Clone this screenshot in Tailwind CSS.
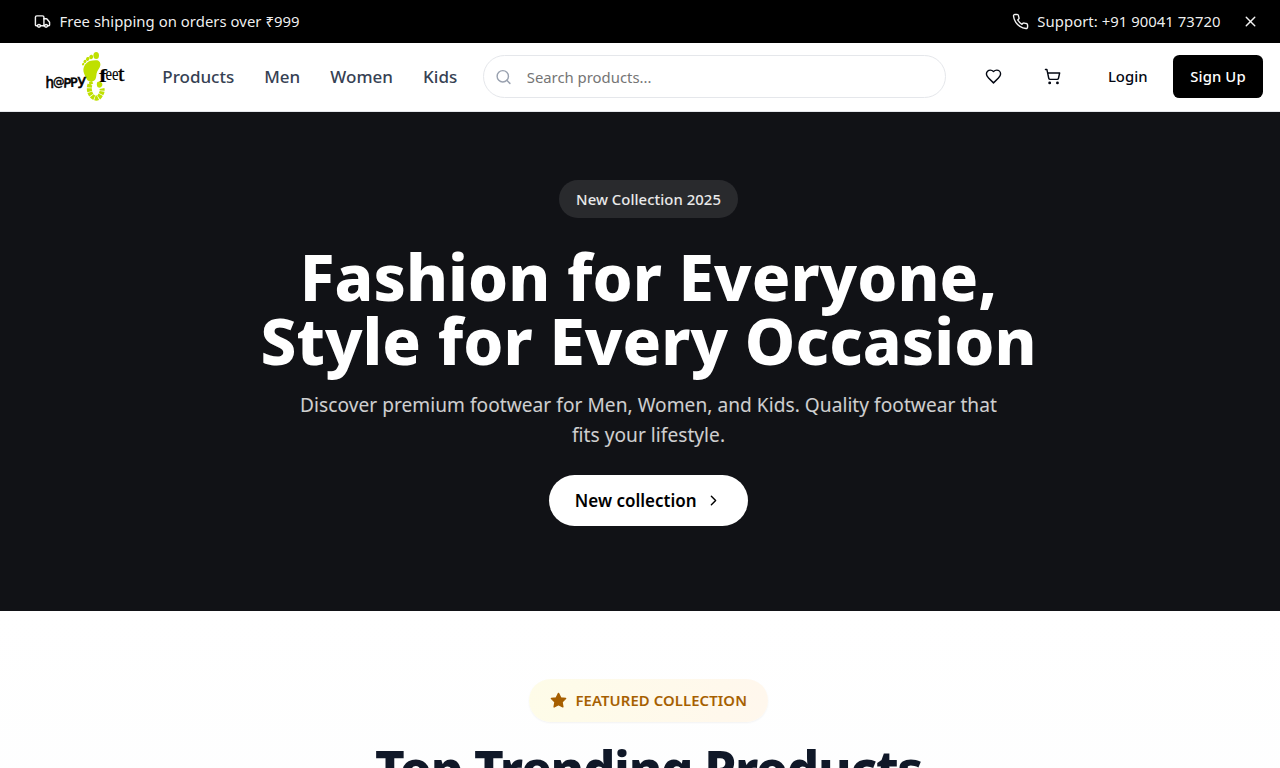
<!DOCTYPE html>
<html lang="en" class="text-[17px]">
<head>
  <meta charset="UTF-8">
  <meta name="viewport" content="width=device-width, initial-scale=1.0">
  <title>Happy Feet</title>
  <script src="https://cdn.jsdelivr.net/npm/@tailwindcss/browser@4"></script>
</head>
<body class="h-screen overflow-hidden bg-white font-['Noto_Sans',sans-serif]">
  <div class="w-[1297px]">
    <!-- announcement bar -->
    <div class="flex h-10 items-center justify-between bg-black px-8 text-sm text-white/95">
      <div class="flex items-center gap-2">
        <svg class="size-4" viewBox="0 0 24 24" fill="none" stroke="currentColor" stroke-width="2" stroke-linecap="round" stroke-linejoin="round"><path d="M14 18V6a2 2 0 0 0-2-2H4a2 2 0 0 0-2 2v11a1 1 0 0 0 1 1h2"/><path d="M15 18H9"/><path d="M19 18h2a1 1 0 0 0 1-1v-3.65a1 1 0 0 0-.22-.624l-3.48-4.35A1 1 0 0 0 17.52 8H14"/><circle cx="17" cy="18" r="2"/><circle cx="7" cy="18" r="2"/></svg>
        <span class="tracking-[0.04px]">Free shipping on orders over ₹999</span>
      </div>
      <div class="flex items-center gap-4">
        <div class="flex items-center gap-2">
          <svg class="size-4" viewBox="0 0 24 24" fill="none" stroke="currentColor" stroke-width="2" stroke-linecap="round" stroke-linejoin="round"><path d="M22 16.92v3a2 2 0 0 1-2.18 2 19.79 19.79 0 0 1-8.63-3.07 19.5 19.5 0 0 1-6-6 19.79 19.79 0 0 1-3.07-8.67A2 2 0 0 1 4.11 2h3a2 2 0 0 1 2 1.72 12.84 12.84 0 0 0 .7 2.81 2 2 0 0 1-.45 2.11L8.09 9.91a16 16 0 0 0 6 6l1.27-1.27a2 2 0 0 1 2.11-.45 12.84 12.84 0 0 0 2.81.7A2 2 0 0 1 22 16.92z"/></svg>
          <span class="tracking-[0.04px]">Support: +91 90041 73720</span>
        </div>
        <button class="p-1" aria-label="Close">
          <svg class="size-4" viewBox="0 0 24 24" fill="none" stroke="currentColor" stroke-width="2" stroke-linecap="round" stroke-linejoin="round"><path d="M18 6 6 18"/><path d="m6 6 12 12"/></svg>
        </button>
      </div>
    </div>

    <!-- header -->
    <header class="border-b border-gray-200 bg-white">
      <div class="flex h-16 items-center px-8">
        <a href="#" class="w-[128.3px] shrink-0 pl-0.5">
          <svg class="h-[62px] w-[100px]" viewBox="36 46 100 62">
            <g fill="#bfe000">
              <ellipse cx="96.2" cy="55.5" rx="2.8" ry="3.6"/>
              <ellipse cx="91.2" cy="57" rx="1.9" ry="2.3" transform="rotate(15 91.2 57)"/>
              <ellipse cx="87.7" cy="58.9" rx="1.7" ry="2" transform="rotate(25 87.7 58.9)"/>
              <ellipse cx="85" cy="61.400" rx="1.4" ry="1.7" transform="rotate(35 85 61.400)"/>
              <ellipse cx="83.200" cy="64.2" rx="1.1" ry="1.4" transform="rotate(35 83.200 64.2)"/>
              <path d="M95.500 60.200c3.500-.2 5.100 2 4.900 4.700-.3 3.300-3.300 5.500-3.800 8.500-.4 2.600-.3 5.300-2.300 7.200-2.300 1.700-6 1.100-7.300-1.200-1.200-2.200-3-5.200-3.500-8-.6-4.700 2.300-8.600 6.200-10.300 1.900-.7 3.900-.9 5.800-.9z"/>
              <path d="M97.500 82c2.200-1.500 4.900.2 4.900 2.400 0 2.100-2 3.700-3.800 3.200-2-.5-2.200-4.400-1.100-5.600z"/>
            </g>
            <path d="M89 82l3-1 1.200 2.400-3.800 2.200z" fill="#bfe000"/>
            <path d="M90 84.500c-1.200 3-.9 7.500 1.400 10.800 2.400 3.300 6.200 3.800 8.300 1 1.900-2.700 2.900-4.800 2.300-7.800" fill="none" stroke="#bfe000" stroke-width="5" stroke-dasharray="3.200 .7"/>
            <g font-family="'DejaVu Sans',sans-serif" fill="#000" stroke="#000">
              <text x="45.500" y="87.500" textLength="8.500" lengthAdjust="spacingAndGlyphs" font-size="15.500" stroke-width=".7">h</text>
              <text x="53" y="85.700" textLength="11.500" lengthAdjust="spacingAndGlyphs" font-size="12" stroke-width=".4">@</text>
              <text x="63.300" y="87.500" textLength="7.500" lengthAdjust="spacingAndGlyphs" font-size="12.500" stroke-width=".7" transform="rotate(3 67 87)">P</text>
              <text x="70.500" y="86.500" textLength="7.500" lengthAdjust="spacingAndGlyphs" font-size="12" stroke-width=".7" transform="rotate(-4 74 86)">P</text>
              <text x="77.200" y="84.500" textLength="9" lengthAdjust="spacingAndGlyphs" font-size="13.500" stroke-width=".6">y</text>
            </g>
            <g font-family="'Liberation Serif',serif" fill="#000" stroke="#000">
              <text x="99.200" y="81.500" textLength="7.500" lengthAdjust="spacingAndGlyphs" font-size="18.500" font-weight="bold" stroke-width=".2">f</text>
              <text x="105.500" y="79.700" textLength="13" lengthAdjust="spacingAndGlyphs" font-size="18" stroke-width=".1">ee</text>
              <text x="118" y="80.500" textLength="6.500" lengthAdjust="spacingAndGlyphs" font-size="20" stroke-width=".3">t</text>
            </g>
          </svg>
        </a>
        <nav class="flex shrink-0 gap-[30px] font-medium text-gray-700">
          <a href="#">Products</a>
          <a href="#">Men</a>
          <a href="#" class="tracking-[0.05px]">Women</a>
          <a href="#">Kids</a>
        </nav>
        <div class="relative ml-[25.5px] mr-[26px] min-w-0 flex-1">
          <svg class="absolute left-3 top-1/2 size-[17px] -translate-y-1/2 text-gray-400" viewBox="0 0 24 24" fill="none" stroke="currentColor" stroke-width="2" stroke-linecap="round" stroke-linejoin="round"><circle cx="11" cy="11" r="8"/><path d="m21 21-4.300-4.300"/></svg>
          <input type="text" placeholder="Search products..." class="block h-10 w-full rounded-full border border-gray-200 pl-[43px] pr-4 text-sm placeholder:text-[#757575]">
        </div>
        <div class="flex shrink-0 items-center gap-4 text-gray-950">
          <button class="flex size-10 items-center justify-center" aria-label="Wishlist">
            <svg class="size-4" viewBox="0 0 24 24" fill="none" stroke="currentColor" stroke-width="2" stroke-linecap="round" stroke-linejoin="round"><path d="M19 14c1.490-1.460 3-3.210 3-5.500A5.500 5.500 0 0 0 16.500 3c-1.760 0-3 .5-4.500 2-1.500-1.500-2.740-2-4.500-2A5.500 5.500 0 0 0 2 8.500c0 2.300 1.500 4.050 3 5.500l7 7Z"/></svg>
          </button>
          <button class="flex size-10 items-center justify-center" aria-label="Cart">
            <svg class="size-4" viewBox="0 0 24 24" fill="none" stroke="currentColor" stroke-width="2" stroke-linecap="round" stroke-linejoin="round"><circle cx="8" cy="21" r="1"/><circle cx="19" cy="21" r="1"/><path d="M2.050 2.050h2l2.660 12.420a2 2 0 0 0 2 1.580h9.780a2 2 0 0 0 1.950-1.570l1.650-7.430H5.120"/></svg>
          </button>
          <div class="flex gap-2 text-sm font-medium">
            <button class="h-10 px-4">Login</button>
            <button class="h-10 w-[90px] rounded-md bg-black text-white tracking-[0.1px]">Sign Up</button>
          </div>
        </div>
      </div>
    </header>

    <!-- hero -->
    <section class="flex h-[499.5px] flex-col items-center bg-[#111216] pt-[68.5px] text-center text-white">
      <div class="rounded-full bg-white/10 px-4 py-2 text-sm font-medium tracking-[0.05px] text-white/90">New Collection 2025</div>
      <h1 class="mt-[27px] text-6xl font-extrabold leading-none tracking-[0.08px]">Fashion for Everyone,<br>Style for Every Occasion</h1>
      <p class="mt-[18px] max-w-[714px] text-lg tracking-[0.04px] text-white/80">Discover premium footwear for Men, Women, and Kids. Quality footwear that fits your lifestyle.</p>
      <button class="mt-[24.5px] flex h-12 items-center gap-2 rounded-full bg-white px-6 font-semibold text-black">
        New collection
        <svg class="size-4" viewBox="0 0 24 24" fill="none" stroke="currentColor" stroke-width="2" stroke-linecap="round" stroke-linejoin="round"><path d="m9 18 6-6-6-6"/></svg>
      </button>
    </section>

    <!-- featured collection -->
    <section class="flex h-[800px] flex-col items-center bg-linear-to-b from-white to-gray-50 pt-16">
      <div class="flex items-center gap-2 rounded-full bg-linear-to-r from-yellow-50 to-orange-50 px-5 py-2.5 text-sm font-semibold text-yellow-700 shadow-xs">
        <svg class="size-4" viewBox="0 0 24 24" fill="currentColor" stroke="currentColor" stroke-width="2" stroke-linecap="round" stroke-linejoin="round"><path d="m12 2 3.090 6.260L22 9.270l-5 4.870 1.180 6.880L12 17.770l-6.180 3.250L7 14.140 2 9.270l6.910-1.010L12 2z"/></svg>
        <span class="tracking-[0.1px]">FEATURED COLLECTION</span>
      </div>
      <h2 class="mt-[21px] text-5xl font-extrabold leading-none tracking-tight text-gray-900">Top Trending Products</h2>
    </section>
  </div>
</body>
</html>
